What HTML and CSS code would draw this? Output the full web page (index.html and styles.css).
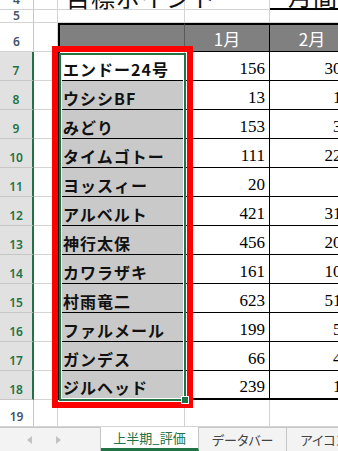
FILE: index.html
```html
<!DOCTYPE html>
<html lang="ja">
<head>
    <meta charset="UTF-8">
    <meta name="viewport" content="width=device-width, initial-scale=1.0">
    <title>上半期_評価</title>
    <link rel="stylesheet" href="styles.css">
</head>
<body>
    <div class="window">
        <div class="sheet">
            <!-- row 4 -->
            <div class="rh">4</div>
            <div class="c"></div>
            <div class="c title">目標ポイント</div>
            <div class="c"></div>
            <div class="c title sub">月間</div>
            <!-- row 5 -->
            <div class="rh short">5</div>
            <div class="c"></div>
            <div class="c"></div>
            <div class="c"></div>
            <div class="c"></div>
            <!-- row 6 -->
            <div class="rh">6</div>
            <div class="c"></div>
            <div class="c hd first"></div>
            <div class="c hd">1月</div>
            <div class="c hd">2月</div>
            <!-- rows 7-18 -->
            <div class="rh sel">7</div>
            <div class="c"></div>
            <div class="c name white">エンドー24号</div>
            <div class="c num">156</div>
            <div class="c num">302</div>

            <div class="rh sel">8</div>
            <div class="c"></div>
            <div class="c name">ウシシBF</div>
            <div class="c num">13</div>
            <div class="c num">15</div>

            <div class="rh sel">9</div>
            <div class="c"></div>
            <div class="c name">みどり</div>
            <div class="c num">153</div>
            <div class="c num">34</div>

            <div class="rh sel">10</div>
            <div class="c"></div>
            <div class="c name">タイムゴトー</div>
            <div class="c num">111</div>
            <div class="c num">225</div>

            <div class="rh sel">11</div>
            <div class="c"></div>
            <div class="c name">ヨッスィー</div>
            <div class="c num">20</div>
            <div class="c num">8</div>

            <div class="rh sel">12</div>
            <div class="c"></div>
            <div class="c name">アルベルト</div>
            <div class="c num">421</div>
            <div class="c num">312</div>

            <div class="rh sel">13</div>
            <div class="c"></div>
            <div class="c name">神行太保</div>
            <div class="c num">456</div>
            <div class="c num">201</div>

            <div class="rh sel">14</div>
            <div class="c"></div>
            <div class="c name">カワラザキ</div>
            <div class="c num">161</div>
            <div class="c num">108</div>

            <div class="rh sel">15</div>
            <div class="c"></div>
            <div class="c name">村雨竜二</div>
            <div class="c num">623</div>
            <div class="c num">512</div>

            <div class="rh sel">16</div>
            <div class="c"></div>
            <div class="c name">ファルメール</div>
            <div class="c num">199</div>
            <div class="c num">58</div>

            <div class="rh sel">17</div>
            <div class="c"></div>
            <div class="c name">ガンデス</div>
            <div class="c num">66</div>
            <div class="c num">46</div>

            <div class="rh sel">18</div>
            <div class="c"></div>
            <div class="c name last">ジルヘッド</div>
            <div class="c num last">239</div>
            <div class="c num last">17</div>
            <!-- row 19 -->
            <div class="rh">19</div>
            <div class="c"></div>
            <div class="c"></div>
            <div class="c"></div>
            <div class="c"></div>

            <div class="red-box"></div>
            <div class="selection"><span class="handle"></span></div>
        </div>

        <div class="tabs">
            <div class="tab-nav">
                <svg width="6" height="8" viewBox="0 0 6 8"><polygon points="5,0 5,8 0,4" fill="#c2c2c2"/></svg>
                <svg width="6" height="8" viewBox="0 0 6 8"><polygon points="1,0 1,8 6,4" fill="#c2c2c2"/></svg>
            </div>
            <div class="tab active">上半期_評価</div>
            <div class="tab">データバー</div>
            <div class="tab">アイコンセット</div>
        </div>
    </div>
</body>
</html>
```

FILE: styles.css
```css
* {
    margin: 0;
    padding: 0;
    box-sizing: border-box;
}

body {
    width: 338px;
    height: 451px;
    overflow: hidden;
    background-color: #fff;
    font-family: "Noto Sans CJK JP", sans-serif;
}

.window {
    width: 338px;
    height: 451px;
    overflow: hidden;
}

.sheet {
    position: relative;
    width: 355px;
    height: 427px;
    display: grid;
    grid-template-columns: 34px 24px 127px 85px 85px;
    grid-template-rows: 10px 13px 29px repeat(12, 29px) 27px;
}

.rh {
    display: flex;
    justify-content: center;
    align-items: flex-end;
    padding-bottom: 3px;
    border-right: 1px solid #c6c6c6;
    border-bottom: 1px solid #d4d4d4;
    font-family: "Noto Sans", sans-serif;
    font-size: 12px;
    font-weight: 600;
    line-height: 12px;
    color: #44546a;
}

.rh.short {
    padding-bottom: 0;
}

.rh.sel {
    background-color: #e1e1e1;
    color: #217346;
    border-right: 2px solid #217346;
    border-bottom-color: #c6c6c6;
}

.c {
    display: flex;
    align-items: flex-end;
    border-right: 1px solid #d4d4d4;
    border-bottom: 1px solid #d4d4d4;
    white-space: nowrap;
}

.title {
    padding-left: 8px;
    font-size: 24px;
    line-height: 24px;
    letter-spacing: 1px;
    color: #111;
}

.title.sub {
    padding-left: 18px;
    border-bottom: 2px solid #000;
}

.hd {
    justify-content: center;
    align-items: center;
    background-color: #808080;
    border-top: 2px solid #000;
    border-bottom: 1px solid #000;
    border-right: 1px solid #000;
    color: #fff;
    font-size: 17px;
    line-height: 17px;
}

.hd.first {
    border-left: 2px solid #000;
    border-right-color: #5a5a5a;
}

.name {
    padding: 0 0 3px 3px;
    background-color: #c9c9c9;
    border-left: 2px solid #000;
    border-bottom: 1px solid #000;
    font-size: 16px;
    font-weight: bold;
    line-height: 16px;
    letter-spacing: 1px;
    color: #111;
}

.name.white {
    background-color: #fff;
}

.num {
    justify-content: flex-end;
    padding: 0 4px 3px 0;
    border-right: 1px solid #000;
    border-bottom: 1px solid #000;
    font-family: "Liberation Serif", serif;
    font-size: 17px;
    line-height: 17px;
    color: #000;
}

.last {
    border-bottom: 2px solid #000;
}

.red-box {
    position: absolute;
    left: 52px;
    top: 46px;
    width: 141px;
    height: 362px;
    border: 6px solid #ff0000;
}

.selection {
    position: absolute;
    left: 59px;
    top: 53px;
    width: 127px;
    height: 348px;
    border: 2px solid #217346;
    box-shadow: inset 0 0 0 1px #fff;
}

.handle {
    position: absolute;
    right: -4px;
    bottom: -4px;
    width: 6px;
    height: 6px;
    background-color: #217346;
    outline: 1px solid #fff;
}

.tabs {
    display: flex;
    height: 24px;
    font-size: 13px;
    font-feature-settings: "palt";
    color: #444;
}

.tab-nav {
    flex-shrink: 0;
    width: 101px;
    display: flex;
    align-items: center;
    gap: 22px;
    padding-left: 27px;
    background-color: #f3f3f3;
    border-top: 1px solid #c6c6c6;
    border-right: 1px solid #c6c6c6;
}

.tab {
    flex-shrink: 0;
    display: flex;
    align-items: center;
    padding: 0 13px;
    background-color: #f3f3f3;
    border-top: 1px solid #c6c6c6;
    border-right: 1px solid #c6c6c6;
    white-space: nowrap;
}

.tab.active {
    width: 98px;
    justify-content: center;
    padding: 0;
    background-color: #fff;
    border-top: none;
    border-bottom: 3px solid #217346;
    color: #217346;
}
```
